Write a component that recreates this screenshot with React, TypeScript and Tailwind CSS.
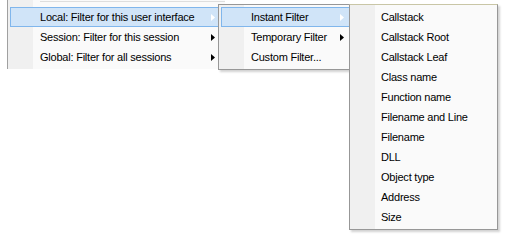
import React from "react";

type Item = { label: string; sub?: boolean };

const Arrow = ({ light }: { light?: boolean }) => (
  <svg width="4" height="7" viewBox="0 0 4 7" className="block">
    <polygon points="0,0 4,3.5 0,7" fill={light ? "#ffffff" : "#000000"} />
  </svg>
);

const Row = ({
  item,
  active,
  arrowPad,
}: {
  item: Item;
  active?: boolean;
  arrowPad: string;
}) => (
  <div
    className={`mx-[2px] h-[20px] flex items-center border ${
      active ? "border-[#80b6ec] bg-[#d0e4f8]" : "border-transparent"
    }`}
  >
    <span className="pl-[29px] flex-1 whitespace-nowrap text-black">{item.label}</span>
    {item.sub && <span className={arrowPad}><Arrow light={active} /></span>}
  </div>
);

const sessionMenu: Item[] = [
  { label: "Local: Filter for this user interface", sub: true },
  { label: "Session: Filter for this session", sub: true },
  { label: "Global: Filter for all sessions", sub: true },
];

const localMenu: Item[] = [
  { label: "Instant Filter", sub: true },
  { label: "Temporary Filter", sub: true },
  { label: "Custom Filter..." },
];

const instantMenu: Item[] = [
  "Callstack",
  "Callstack Root",
  "Callstack Leaf",
  "Class name",
  "Function name",
  "Filename and Line",
  "Filename",
  "DLL",
  "Object type",
  "Address",
  "Size",
].map((label) => ({ label }));

export default function App() {
  return (
    <div className="relative w-[509px] h-[240px] bg-white overflow-hidden font-['Liberation_Sans',Arial,sans-serif] text-[11px] tracking-[-0.22px]">
      {/* parent menu (top is cut off) */}
      <div className="absolute left-[7px] top-0 w-[218px] h-[69px] border-l border-[#a0a0a0] bg-[linear-gradient(to_right,#f0f0f0_25px,#fafafa_25px)]">
        <div className="ml-[32px] mt-[1px] h-[1px] bg-[#dedede]" />
        <div className="pt-[5px]">
          {sessionMenu.map((item, i) => (
            <Row key={i} item={item} active={i === 0} arrowPad="pr-[7px]" />
          ))}
        </div>
      </div>

      {/* second level */}
      <div className="absolute left-[218px] top-[4px] w-[136px] h-[66px] py-[2px] border border-[#979797] bg-[linear-gradient(to_right,#f0f0f0_25px,#fafafa_25px)] shadow-[2px_2px_2px_rgba(0,0,0,0.18)]">
        {localMenu.map((item, i) => (
          <Row key={i} item={item} active={i === 0} arrowPad="pr-[6px]" />
        ))}
      </div>

      {/* third level */}
      <div className="absolute left-[349px] top-[4px] w-[149px] h-[226px] py-[2px] border border-[#979797] border-t-[#c9c6a6] bg-[linear-gradient(to_right,#f0f0f0_25px,#fafafa_25px)] shadow-[2px_2px_2px_rgba(0,0,0,0.18)]">
        {instantMenu.map((item, i) => (
          <div key={i} className="mx-[2px] h-[20px] flex items-center border border-transparent">
            <span className="pl-[28px] whitespace-nowrap text-black">{item.label}</span>
          </div>
        ))}
      </div>
    </div>
  );
}
